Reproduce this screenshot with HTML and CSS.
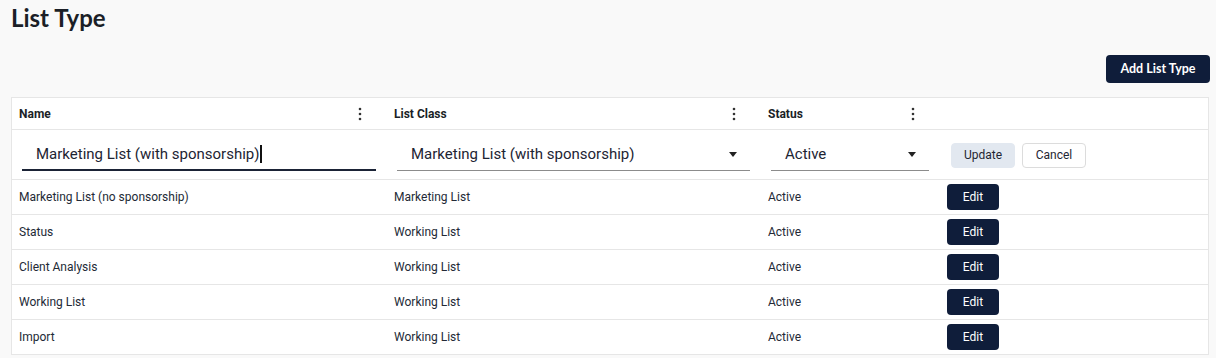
FILE: index.html
```html
<!DOCTYPE html>
<html lang="en">
<head>
  <meta charset="UTF-8">
  <meta name="viewport" content="width=device-width, initial-scale=1.0">
  <title>List Type</title>
  <link rel="stylesheet" href="styles.css">
</head>
<body>
  <div class="page">
    <h1 class="title">List Type</h1>

    <div class="toolbar">
      <button class="primary-btn">Add List Type</button>
    </div>

    <div class="grid">
      <div class="row head">
        <div class="cell">
          <span>Name</span>
          <svg class="kebab" width="4" height="14" viewBox="0 0 4 14"><circle cx="2" cy="2" r="1.3"/><circle cx="2" cy="7" r="1.3"/><circle cx="2" cy="12" r="1.3"/></svg>
        </div>
        <div class="cell">
          <span>List Class</span>
          <svg class="kebab" width="4" height="14" viewBox="0 0 4 14"><circle cx="2" cy="2" r="1.3"/><circle cx="2" cy="7" r="1.3"/><circle cx="2" cy="12" r="1.3"/></svg>
        </div>
        <div class="cell">
          <span>Status</span>
          <svg class="kebab" width="4" height="14" viewBox="0 0 4 14"><circle cx="2" cy="2" r="1.3"/><circle cx="2" cy="7" r="1.3"/><circle cx="2" cy="12" r="1.3"/></svg>
        </div>
        <div class="cell"></div>
      </div>

      <div class="row editing">
        <div class="cell">
          <div class="field focused">Marketing List (with sponsorship)<span class="caret"></span></div>
        </div>
        <div class="cell">
          <div class="field select">
            <span>Marketing List (with sponsorship)</span>
            <svg class="arrow" width="8" height="5" viewBox="0 0 8 5"><path d="M0 0h8L4 5z"/></svg>
          </div>
        </div>
        <div class="cell">
          <div class="field select">
            <span>Active</span>
            <svg class="arrow" width="8" height="5" viewBox="0 0 8 5"><path d="M0 0h8L4 5z"/></svg>
          </div>
        </div>
        <div class="cell actions">
          <button class="update-btn">Update</button>
          <button class="cancel-btn">Cancel</button>
        </div>
      </div>

      <div class="row">
        <div class="cell">Marketing List (no sponsorship)</div>
        <div class="cell">Marketing List</div>
        <div class="cell">Active</div>
        <div class="cell"><button class="edit-btn">Edit</button></div>
      </div>
      <div class="row">
        <div class="cell">Status</div>
        <div class="cell">Working List</div>
        <div class="cell">Active</div>
        <div class="cell"><button class="edit-btn">Edit</button></div>
      </div>
      <div class="row">
        <div class="cell">Client Analysis</div>
        <div class="cell">Working List</div>
        <div class="cell">Active</div>
        <div class="cell"><button class="edit-btn">Edit</button></div>
      </div>
      <div class="row">
        <div class="cell">Working List</div>
        <div class="cell">Working List</div>
        <div class="cell">Active</div>
        <div class="cell"><button class="edit-btn">Edit</button></div>
      </div>
      <div class="row">
        <div class="cell">Import</div>
        <div class="cell">Working List</div>
        <div class="cell">Active</div>
        <div class="cell"><button class="edit-btn">Edit</button></div>
      </div>
    </div>
  </div>
</body>
</html>
```

FILE: styles.css
```css
:root {
  --navy: #0f1d3a;
  --text: #232a36;
  --border: #e6e6e6;
  --page-bg: #f9f9f9;
}

* {
  box-sizing: border-box;
  margin: 0;
  padding: 0;
}

body {
  background-color: var(--page-bg);
  color: var(--text);
  font-family: Roboto, "Liberation Sans", sans-serif;
  font-size: 12px;
  overflow: hidden;
}

.page {
  padding: 4px 6px 0 11px;
}

.title {
  font-family: Lato, "Liberation Sans", sans-serif;
  font-size: 24px;
  font-weight: 700;
  line-height: 1.2;
  color: #1b1f27;
}

.toolbar {
  display: flex;
  justify-content: flex-end;
  margin-top: 22px;
  margin-bottom: 14px;
}

.primary-btn {
  background-color: var(--navy);
  color: #fff;
  border: none;
  border-radius: 4px;
  width: 104px;
  height: 28px;
  font-family: Lato, "Liberation Sans", sans-serif;
  font-size: 12.5px;
  font-weight: 700;
}

.grid {
  width: 1198px;
  background-color: #fff;
  border: 1px solid var(--border);
  border-bottom: none;
}

.row {
  display: grid;
  grid-template-columns: 375px 374px 179px 1fr;
  height: 35px;
  border-bottom: 1px solid var(--border);
  margin-left: -1px;
}

.row.head {
  height: 32px;
}

.row.editing {
  height: 50px;
}

.cell {
  display: flex;
  align-items: center;
  padding-left: 8px;
  white-space: nowrap;
}

.head .cell {
  justify-content: space-between;
  padding-right: 24px;
  padding-top: 1px;
  font-weight: 700;
  color: #1b1f27;
}

.kebab {
  fill: #333;
}

.editing .cell {
  padding-left: 11px;
  padding-right: 10px;
}

.field {
  display: flex;
  align-items: center;
  width: 100%;
  height: 34px;
  padding: 1px 14px 0;
  font-size: 15px;
  color: #1d2433;
  border-bottom: 1px solid #8c8c8c;
}

.field.focused {
  border-bottom: 2px solid #1b2336;
  padding-top: 2px;
}

.caret {
  display: inline-block;
  width: 1.5px;
  height: 18px;
  background-color: #111;
  margin-left: 1px;
}

.field.select {
  justify-content: space-between;
  padding-right: 13px;
}

.arrow {
  fill: #222;
}

.editing .actions {
  gap: 7px;
  padding-left: 12px;
  padding-top: 2px;
}

.update-btn,
.cancel-btn {
  width: 64px;
  height: 25px;
  border-radius: 4px;
  font-family: Roboto, "Liberation Sans", sans-serif;
  font-size: 12px;
  color: #1f2633;
}

.update-btn {
  background-color: #e2e8f0;
  border: 1px solid #e2e8f0;
}

.cancel-btn {
  background-color: #fff;
  border: 1px solid #dcdcdc;
}

.edit-btn {
  width: 52px;
  height: 26px;
  background-color: var(--navy);
  color: #fff;
  border: none;
  border-radius: 4px;
  font-family: Roboto, "Liberation Sans", sans-serif;
  font-size: 12px;
}
```
